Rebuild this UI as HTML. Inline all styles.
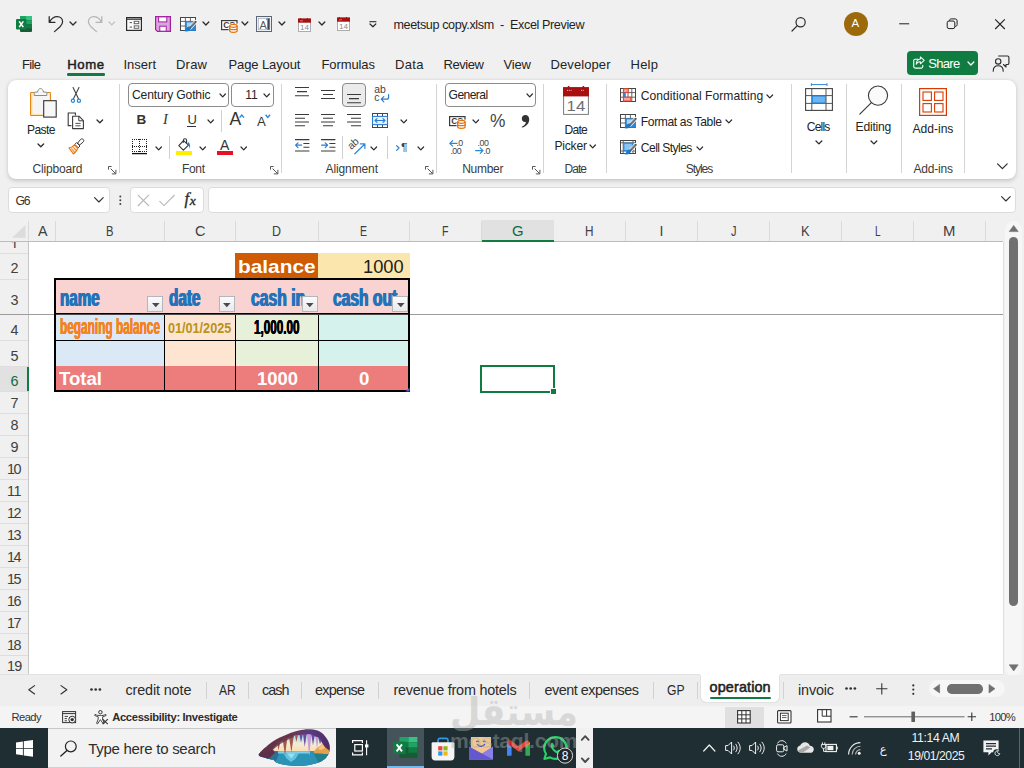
<!DOCTYPE html>
<html><head><meta charset="utf-8"><title>meetsup copy.xlsm - Excel Preview</title>
<style>
*{box-sizing:border-box;margin:0;padding:0}
html,body{width:1024px;height:768px;overflow:hidden;background:#f0f0f0;font-family:"Liberation Sans",sans-serif;color:#242424}
.a{position:absolute}
.t{position:absolute;white-space:pre;line-height:1}
svg{position:absolute;overflow:visible}
.sep{position:absolute;width:1px;background:#d4d4d4}
.fb{position:absolute;background:#fff;border:1px solid #dcdcdc;border-radius:4px;top:187px;height:26px}
.bx{position:absolute;background:#fff;border:1px solid #8c8c8c;border-radius:4px}
</style></head><body>
<svg style="left:16px;top:16px" width="16" height="16" viewBox="0 0 16 16">
<rect x="4" y="0" width="12" height="16" rx="1" fill="#185c37"/>
<rect x="4" y="0" width="6" height="4.3" fill="#21a366"/><rect x="10" y="0" width="6" height="4.3" fill="#33c481"/>
<rect x="4" y="4.3" width="6" height="4" fill="#107c41"/><rect x="10" y="4.3" width="6" height="4" fill="#21a366"/>
<rect x="4" y="8.3" width="6" height="3.9" fill="#185c37"/><rect x="10" y="8.3" width="6" height="3.9" fill="#107c41"/>
<rect x="0" y="3" width="10.5" height="10.5" rx="1" fill="#107c41"/>
<path d="M3.2 5.4 L7.3 11.1 M7.3 5.4 L3.2 11.1" stroke="#fff" stroke-width="1.6"/></svg>
<svg style="left:48px;top:15px" width="16" height="18" viewBox="0 0 16 18"><path d="M1.2 1.5 V7.3 H7 M1.6 7 C3.5 3.2 6.5 1.6 9.3 1.6 C12.6 1.6 14.6 4 14.6 6.8 C14.6 9 13.5 10.3 12 11.8 L6.5 16.6" fill="none" stroke="#2b2b2b" stroke-width="1.25" stroke-linecap="round" stroke-linejoin="round"/></svg>
<svg style="left:69.5px;top:22px" width="6" height="4"><path d="M0 0 L3.0 3 L6 0" fill="none" stroke="#2b2b2b" stroke-width="1.3" stroke-linecap="round" stroke-linejoin="round"/></svg>
<svg style="left:87px;top:15px" width="16" height="18" viewBox="0 0 16 18"><path d="M14.8 1.5 V7.3 H9 M14.4 7 C12.5 3.2 9.5 1.6 6.7 1.6 C3.4 1.6 1.4 4 1.4 6.8 C1.4 9 2.5 10.3 4 11.8 L9.5 16.6" fill="none" stroke="#b4b4b4" stroke-width="1.25" stroke-linecap="round" stroke-linejoin="round"/></svg>
<svg style="left:108.7px;top:22px" width="5.6" height="3.8"><path d="M0 0 L2.8 2.8 L5.6 0" fill="none" stroke="#c0c0c0" stroke-width="1.2" stroke-linecap="round" stroke-linejoin="round"/></svg>
<svg style="left:126px;top:17px" width="16" height="14" viewBox="0 0 16 14"><rect x=".6" y=".6" width="14.8" height="12.8" fill="#fafafa" stroke="#2b2b2b" stroke-width="1.2"/><path d="M.6 2.2H15.4" stroke="#2b2b2b" stroke-width="1.2"/>
<path d="M3.6 5.6H6M3.6 10.1H6" stroke="#555" stroke-width="1"/><rect x="8.2" y="4.3" width="4.6" height="2.4" fill="#fff" stroke="#555" stroke-width=".9"/><rect x="8.2" y="8.9" width="4.6" height="2.4" fill="#fff" stroke="#555" stroke-width=".9"/></svg>
<svg style="left:155px;top:16px" width="16" height="16" viewBox="0 0 16 16"><path d="M.6 .6H15.4V15.4H2.4L.6 13.6Z" fill="#dba4db" stroke="#a31fa3" stroke-width="1.2"/><rect x="3.6" y=".9" width="8.2" height="5" fill="#fff" stroke="#a31fa3" stroke-width="1"/><rect x="4.8" y="10.2" width="6.4" height="5" fill="#fff" stroke="#a31fa3" stroke-width="1"/></svg>
<svg style="left:180px;top:17px" width="17" height="15" viewBox="0 0 17 15"><rect x=".5" y=".5" width="15" height="13" fill="#fff" stroke="#444" stroke-width="1"/><path d="M.5 4.4H15.5M.5 9H15.5M5.4 .5V13.5M10.4 .5V13.5" stroke="#555" stroke-width=".9"/>
<rect x="5.6" y="4.4" width="10.4" height="9.4" fill="#2b88d8"/><rect x="6.8" y="5.4" width="5.6" height="5" fill="#a6d3f5"/>
<path d="M15.9 4.6L9.6 11.2" stroke="#fff" stroke-width="3.6" stroke-linecap="round"/><path d="M15.7 4.8L10 10.8" stroke="#505050" stroke-width="2" stroke-linecap="round"/><path d="M14.9 5.4L11 9.5" stroke="#b8b8b8" stroke-width=".7" stroke-linecap="round"/>
<path d="M9.9 9.6C8.1 9.1 6.3 10.6 5.9 12.8C5 13.5 4.3 13.7 3.4 13.6C6.2 15.4 10.6 14.4 11.1 10.9Z" fill="#1e78c8"/></svg>
<svg style="left:202.5px;top:22px" width="5.8" height="4"><path d="M0 0 L2.9 3 L5.8 0" fill="none" stroke="#2b2b2b" stroke-width="1.3" stroke-linecap="round" stroke-linejoin="round"/></svg>
<svg style="left:221px;top:20px" width="17" height="13" viewBox="0 0 17 13"><rect x=".6" y=".6" width="15.4" height="9" fill="#fff" stroke="#3a3a3a" stroke-width="1.2"/>
<text x="2.3" y="8" font-family="Liberation Sans,sans-serif" font-size="8.6" font-weight="700" fill="#3a3a3a" letter-spacing="-.6">CC</text>
<rect x="7.6" y="3.6" width="9.4" height="9.4" fill="#fff"/>
<path d="M8.7 5.8V11C8.7 12.7 16.1 12.7 16.1 11V5.8" fill="#fff" stroke="#e8710a" stroke-width="1.3"/><ellipse cx="12.4" cy="5.8" rx="3.7" ry="1.5" fill="#fff" stroke="#e8710a" stroke-width="1.3"/><path d="M8.7 8.4C8.7 10.1 16.1 10.1 16.1 8.4" fill="none" stroke="#e8710a" stroke-width="1.2"/></svg>
<svg style="left:242.4px;top:22px" width="5.8" height="4"><path d="M0 0 L2.9 3 L5.8 0" fill="none" stroke="#2b2b2b" stroke-width="1.3" stroke-linecap="round" stroke-linejoin="round"/></svg>
<svg style="left:256px;top:16px" width="16" height="16" viewBox="0 0 16 16"><rect x=".5" y=".5" width="15" height="15" fill="#fff" stroke="#5b6778" stroke-width="1"/><rect x="2.2" y="2.2" width="11.6" height="11.6" fill="#fff" stroke="#9aa3b0" stroke-width=".8"/>
<rect x="11.4" y="2.4" width="2.2" height="11.2" fill="#3c4350"/><rect x="10" y="2.4" width="1.6" height="1.8" fill="#8a93a1"/>
<text x="3.4" y="12.6" font-family="Liberation Sans,sans-serif" font-size="11" fill="#5a5a5a">A</text></svg>
<svg style="left:278.8px;top:22px" width="5.8" height="4"><path d="M0 0 L2.9 3 L5.8 0" fill="none" stroke="#2b2b2b" stroke-width="1.3" stroke-linecap="round" stroke-linejoin="round"/></svg>
<svg style="left:298px;top:17.8px" width="13" height="14" viewBox="0 0 13 14"><rect x=".4" y=".9" width="12.2" height="12.6" fill="#fff" stroke="#9a9a9a" stroke-width=".8"/><rect x="0" y=".5" width="13" height="4.2" fill="#a80f0f"/>
<path d="M2.4 0V1.4M9.4 0V1.4" stroke="#a80f0f" stroke-width="1"/><path d="M2 2.8H5" stroke="#e8a0a0" stroke-width=".7"/>
<text x="2.1" y="12.2" font-family="Liberation Sans,sans-serif" font-size="8" fill="#8a8a8a" textLength="9" lengthAdjust="spacingAndGlyphs">14</text></svg>
<svg style="left:318.6px;top:22px" width="5.8" height="4"><path d="M0 0 L2.9 3 L5.8 0" fill="none" stroke="#2b2b2b" stroke-width="1.3" stroke-linecap="round" stroke-linejoin="round"/></svg>
<svg style="left:337.2px;top:16.8px" width="13" height="14" viewBox="0 0 13 14"><rect x=".4" y=".9" width="12.2" height="12.6" fill="#fff" stroke="#9a9a9a" stroke-width=".8"/><rect x="0" y=".5" width="13" height="4.2" fill="#a80f0f"/>
<path d="M2.4 0V1.4M9.4 0V1.4" stroke="#a80f0f" stroke-width="1"/><path d="M2 2.8H5" stroke="#e8a0a0" stroke-width=".7"/>
<text x="2.1" y="12.2" font-family="Liberation Sans,sans-serif" font-size="8" fill="#8a8a8a" textLength="9" lengthAdjust="spacingAndGlyphs">14</text></svg>
<svg style="left:369px;top:21px" width="8" height="7"><path d="M.4 .7H7.4" stroke="#2b2b2b" stroke-width="1.1"/><path d="M1 3L3.9 5.8L6.8 3" fill="none" stroke="#2b2b2b" stroke-width="1.2" stroke-linecap="round" stroke-linejoin="round"/></svg>
<span class="t" style="left:393.50px;top:18.93px;font-size:12.6px;color:#1f1f1f;letter-spacing:-0.386px;">meetsup copy.xlsm  -  Excel Preview</span>
<svg style="left:791px;top:16px" width="16" height="16" viewBox="0 0 16 16"><circle cx="9.6" cy="6.2" r="4.6" fill="none" stroke="#2b2b2b" stroke-width="1.2"/><path d="M6.3 9.6L1 15" stroke="#2b2b2b" stroke-width="1.2" stroke-linecap="round"/></svg>
<div class="a" style="left:844px;top:12px;width:24px;height:24px;border-radius:12px;background:#9c690d"></div>
<span class="t" style="left:851.60px;top:18.47px;font-size:11.5px;color:#fff;">A</span>
<svg style="left:899px;top:18px" width="110" height="12"><path d="M.2 5.8H10.2" stroke="#1f1f1f" stroke-width="1"/><rect x="48.2" y="3" width="7.6" height="7.6" rx="1.8" fill="none" stroke="#1f1f1f" stroke-width="1"/><path d="M50.4 3V2.6C50.4 1.6 51.2 .9 52.2 .9H56C57.4 .9 58.1 1.6 58.1 3V6.6C58.1 7.6 57.4 8.4 56.4 8.4H56" fill="none" stroke="#1f1f1f" stroke-width="1"/><path d="M96.2 1.4L105.8 11M105.8 1.4L96.2 11" stroke="#1f1f1f" stroke-width="1.1"/></svg>
<span class="t" style="left:22.00px;top:57.70px;font-size:13px;letter-spacing:-0.651px;">File</span>
<span class="t" style="left:123.50px;top:57.70px;font-size:13px;">Insert</span>
<span class="t" style="left:176.00px;top:57.70px;font-size:13px;letter-spacing:0.219px;">Draw</span>
<span class="t" style="left:228.50px;top:57.70px;font-size:13px;letter-spacing:-0.102px;">Page Layout</span>
<span class="t" style="left:321.50px;top:57.70px;font-size:13px;letter-spacing:-0.098px;">Formulas</span>
<span class="t" style="left:395.00px;top:57.70px;font-size:13px;letter-spacing:0.344px;">Data</span>
<span class="t" style="left:443.50px;top:57.70px;font-size:13px;letter-spacing:-0.425px;">Review</span>
<span class="t" style="left:503.50px;top:57.70px;font-size:13px;letter-spacing:-0.151px;">View</span>
<span class="t" style="left:550.50px;top:57.70px;font-size:13px;letter-spacing:0.092px;">Developer</span>
<span class="t" style="left:630.50px;top:57.70px;font-size:13px;letter-spacing:0.250px;">Help</span>
<span class="t" style="left:67.20px;top:57.53px;font-size:13.2px;color:#1f1f1f;letter-spacing:0.604px;-webkit-text-stroke:.5px #1f1f1f;">Home</span>
<div class="a" style="left:67px;top:73.4px;width:37.5px;height:2.3px;border-radius:1.2px;background:#107c41"></div>
<div class="a" style="left:907px;top:51px;width:71px;height:24px;border-radius:4px;background:#107c41"></div>
<svg style="left:913px;top:56px" width="12" height="13" viewBox="0 0 12 13"><path d="M5 3.2H2.2C1.4 3.2 .7 3.9 .7 4.7V10.6C.7 11.4 1.4 12.1 2.2 12.1H8.3C9.1 12.1 9.8 11.4 9.8 10.6V9.3" fill="none" stroke="#fff" stroke-width="1.1" stroke-linecap="round"/><path d="M7.4 .9L11.2 4.4L7.4 7.8V5.8C5.4 5.7 4 6.5 3.2 8.3C3.3 5.2 4.8 3.2 7.4 3Z" fill="none" stroke="#fff" stroke-width="1.05" stroke-linejoin="round"/></svg>
<span class="t" style="left:928.20px;top:57.00px;font-size:13px;color:#fff;letter-spacing:-0.676px;">Share</span>
<svg style="left:967.5px;top:61.6px" width="5.8" height="4"><path d="M0 0 L2.9 3 L5.8 0" fill="none" stroke="#fff" stroke-width="1.3" stroke-linecap="round" stroke-linejoin="round"/></svg>
<svg style="left:992px;top:55px" width="18" height="17" viewBox="0 0 18 17"><path d="M6.2 1H15.6C16.3 1 16.9 1.6 16.9 2.3V8.2C16.9 8.9 16.3 9.5 15.6 9.5H14V12L11.4 9.5H11" fill="none" stroke="#2b2b2b" stroke-width="1.1" stroke-linejoin="round"/><circle cx="6.2" cy="6.4" r="2.7" fill="#f0f0f0" stroke="#2b2b2b" stroke-width="1.1"/><path d="M1.2 16.2C1.2 12.6 3.4 10.8 6.2 10.8C9 10.8 11.2 12.6 11.2 16.2" fill="none" stroke="#2b2b2b" stroke-width="1.1" stroke-linecap="round"/></svg>
<div class="a" style="left:8px;top:79.5px;width:1007.5px;height:99px;background:#fff;border-radius:8px;box-shadow:0 1.5px 4px rgba(0,0,0,.17),0 0 1px rgba(0,0,0,.12)"></div>
<div class="sep" style="left:119px;top:84px;height:89px"></div>
<div class="sep" style="left:281px;top:84px;height:89px"></div>
<div class="sep" style="left:436px;top:84px;height:89px"></div>
<div class="sep" style="left:543px;top:84px;height:89px"></div>
<div class="sep" style="left:606.4px;top:84px;height:89px"></div>
<div class="sep" style="left:791px;top:84px;height:89px"></div>
<div class="sep" style="left:846px;top:84px;height:89px"></div>
<div class="sep" style="left:901px;top:84px;height:89px"></div>
<div class="sep" style="left:964px;top:84px;height:89px"></div>
<div class="sep" style="left:221px;top:110px;height:22px;background:#d0d0d0"></div>
<div class="sep" style="left:169px;top:135.5px;height:23.0px;background:#d0d0d0"></div>
<div class="sep" style="left:342px;top:135.5px;height:23.0px;background:#d0d0d0"></div>
<div class="sep" style="left:387px;top:135.5px;height:23.0px;background:#d0d0d0"></div>
<span class="t" style="left:32.50px;top:162.84px;font-size:12px;color:#3b3b3b;letter-spacing:-0.172px;">Clipboard</span>
<svg style="left:108px;top:165.5px" width="9" height="9" viewBox="0 0 9 9"><path d="M.5 3.6V.5H3.6" fill="none" stroke="#555" stroke-width="1"/><path d="M2.6 2.6L7.6 7.6M7.9 3.8V7.9H3.8" fill="none" stroke="#555" stroke-width="1"/></svg>
<span class="t" style="left:182.00px;top:162.84px;font-size:12px;color:#3b3b3b;letter-spacing:-0.339px;">Font</span>
<svg style="left:269.7px;top:165.5px" width="9" height="9" viewBox="0 0 9 9"><path d="M.5 3.6V.5H3.6" fill="none" stroke="#555" stroke-width="1"/><path d="M2.6 2.6L7.6 7.6M7.9 3.8V7.9H3.8" fill="none" stroke="#555" stroke-width="1"/></svg>
<span class="t" style="left:325.50px;top:162.84px;font-size:12px;color:#3b3b3b;letter-spacing:-0.109px;">Alignment</span>
<svg style="left:425.2px;top:165.5px" width="9" height="9" viewBox="0 0 9 9"><path d="M.5 3.6V.5H3.6" fill="none" stroke="#555" stroke-width="1"/><path d="M2.6 2.6L7.6 7.6M7.9 3.8V7.9H3.8" fill="none" stroke="#555" stroke-width="1"/></svg>
<span class="t" style="left:462.20px;top:162.84px;font-size:12px;color:#3b3b3b;letter-spacing:-0.278px;">Number</span>
<svg style="left:531.8px;top:165.5px" width="9" height="9" viewBox="0 0 9 9"><path d="M.5 3.6V.5H3.6" fill="none" stroke="#555" stroke-width="1"/><path d="M2.6 2.6L7.6 7.6M7.9 3.8V7.9H3.8" fill="none" stroke="#555" stroke-width="1"/></svg>
<span class="t" style="left:564.50px;top:162.84px;font-size:12px;color:#3b3b3b;letter-spacing:-0.953px;">Date</span>
<span class="t" style="left:685.70px;top:162.84px;font-size:12px;color:#3b3b3b;letter-spacing:-1.038px;">Styles</span>
<span class="t" style="left:913.50px;top:162.84px;font-size:12px;color:#3b3b3b;letter-spacing:-0.198px;">Add-ins</span>
<svg style="left:29px;top:87px" width="29" height="32" viewBox="0 0 29 32">
<rect x="1.6" y="5.5" width="19.8" height="23" rx=".6" fill="#fde6b0" stroke="#e8830e" stroke-width="1.1"/>
<rect x="3.6" y="6.4" width="17" height="20.4" fill="#f5f5f5"/>
<path d="M5.2 8.5V5.8C5.2 5.4 5.5 5.1 5.9 5.1H8.6C8.9 2.8 10 1.5 11.5 1.5C13 1.5 14.1 2.8 14.4 5.1H17.1C17.5 5.1 17.8 5.4 17.8 5.8V8.5Z" fill="#f7f7f7" stroke="#8a8a8a" stroke-width="1" stroke-linejoin="round"/>
<rect x="14.7" y="13.7" width="12.5" height="16.4" fill="#f7f7f7" stroke="#333" stroke-width="1.1"/></svg>
<span class="t" style="left:27.00px;top:123.76px;font-size:12.1px;letter-spacing:-0.609px;">Paste</span>
<svg style="left:37.6px;top:144px" width="5.6" height="3.8"><path d="M0 0 L2.8 2.8 L5.6 0" fill="none" stroke="#2b2b2b" stroke-width="1.3" stroke-linecap="round" stroke-linejoin="round"/></svg>
<svg style="left:70px;top:86px" width="13" height="18" viewBox="0 0 13 18"><path d="M3.1 1.4L8.7 13.2M9 1.4L3.2 13.2" stroke="#444" stroke-width="1.1" stroke-linecap="round"/><circle cx="2.9" cy="14.8" r="1.6" fill="#fff" stroke="#2b88d8" stroke-width="1.2"/><circle cx="8.9" cy="14.8" r="1.6" fill="#fff" stroke="#2b88d8" stroke-width="1.2"/></svg>
<svg style="left:67px;top:112px" width="18" height="18" viewBox="0 0 18 18"><path d="M4.4 13.6H1.2V1H8.4V3.4" fill="none" stroke="#3b3b3b" stroke-width="1.1"/><path d="M5.6 4.2H12L16.4 8.6V16.6H5.6Z" fill="#fff" stroke="#3b3b3b" stroke-width="1.1" stroke-linejoin="round"/><path d="M11.8 4.4V8.8H16.2" fill="none" stroke="#3b3b3b" stroke-width="1"/><path d="M8.4 11.4H13.6M8.4 13.8H13.6" stroke="#3b3b3b" stroke-width=".9"/></svg>
<svg style="left:96.6px;top:120px" width="5.6" height="3.8"><path d="M0 0 L2.8 2.8 L5.6 0" fill="none" stroke="#2b2b2b" stroke-width="1.3" stroke-linecap="round" stroke-linejoin="round"/></svg>
<svg style="left:68px;top:138px" width="17" height="17" viewBox="0 0 17 17"><path d="M15.2 1.4C16 2.2 16 3.2 15.2 4L11.6 7L9.6 5L12.6 1.4C13.4 .6 14.4 .6 15.2 1.4Z" fill="#fff" stroke="#3b3b3b" stroke-width="1"/><path d="M8.6 4.6L12 8L10.2 9.8L6.8 6.4Z" fill="#fff" stroke="#3b3b3b" stroke-width="1"/><path d="M6.4 6.8L9.8 10.2C9 12.4 7.4 14.4 5.4 16L1 10C3.2 9.6 5 8.6 6.4 6.8Z" fill="#fbe3c8" stroke="#e8710a" stroke-width="1.1" stroke-linejoin="round"/><path d="M3.4 10.6L6.6 14.4M5.4 9.4L8.2 12.6" stroke="#e8710a" stroke-width=".9"/></svg>
<div class="bx" style="left:128px;top:83px;width:100.5px;height:23.6px"></div>
<span class="t" style="left:132.00px;top:88.76px;font-size:12.1px;letter-spacing:-0.167px;">Century Gothic</span>
<svg style="left:220px;top:93.6px" width="5.4" height="3.8"><path d="M0 0 L2.7 2.8 L5.4 0" fill="none" stroke="#2b2b2b" stroke-width="1.2" stroke-linecap="round" stroke-linejoin="round"/></svg>
<div class="bx" style="left:230.8px;top:83px;width:42.8px;height:23.6px"></div>
<span class="t" style="left:245.20px;top:88.76px;font-size:12.1px;">11</span>
<svg style="left:264.2px;top:93.6px" width="5.4" height="3.8"><path d="M0 0 L2.7 2.8 L5.4 0" fill="none" stroke="#2b2b2b" stroke-width="1.2" stroke-linecap="round" stroke-linejoin="round"/></svg>
<span class="t" style="left:136.60px;top:112.87px;font-size:13.5px;font-weight:700;color:#333;letter-spacing:-1.750px;">B</span>
<span class="t" style="left:163.00px;top:112.21px;font-size:14.5px;color:#333;font-family:'Liberation Serif',serif;font-style:italic;">I</span>
<span class="t" style="left:187.60px;top:113.00px;font-size:13px;color:#333;letter-spacing:-1.391px;">U</span>
<div class="a" style="left:187px;top:125.6px;width:9px;height:1px;background:#333"></div>
<svg style="left:208px;top:120px" width="5.4" height="3.8"><path d="M0 0 L2.7 2.8 L5.4 0" fill="none" stroke="#2b2b2b" stroke-width="1.2" stroke-linecap="round" stroke-linejoin="round"/></svg>
<span class="t" style="left:229.40px;top:111.19px;font-size:17.5px;color:#333;letter-spacing:-0.688px;">A</span>
<svg style="left:239.2px;top:113.8px" width="6" height="5"><path d="M.6 3.6L2.8 1L5 3.6" fill="none" stroke="#2b88d8" stroke-width="1.4"/></svg>
<span class="t" style="left:257.00px;top:114.83px;font-size:13.2px;color:#333;letter-spacing:-0.197px;">A</span>
<svg style="left:265px;top:113.6px" width="6" height="5"><path d="M.6 .8L2.8 3.4L5 .8" fill="none" stroke="#2b88d8" stroke-width="1.4"/></svg>
<svg style="left:132px;top:139px" width="15" height="16" viewBox="0 0 15 16"><path d="M0 .5H15M0 7.5H15M0 12.5H15" stroke="#222" stroke-width="1" stroke-dasharray="1 1"/><path d="M.5 0V13M7.5 0V13M14.5 0V13" stroke="#222" stroke-width="1" stroke-dasharray="1 1"/><path d="M0 14.6H15" stroke="#111" stroke-width="1.3"/></svg>
<svg style="left:155.6px;top:147px" width="5.4" height="3.8"><path d="M0 0 L2.7 2.8 L5.4 0" fill="none" stroke="#2b2b2b" stroke-width="1.2" stroke-linecap="round" stroke-linejoin="round"/></svg>
<svg style="left:176px;top:138px" width="17" height="17" viewBox="0 0 17 17"><path d="M2.8 7.7L7.5 2.6L12.5 7.1L7.4 12.2Z" fill="#fff" stroke="#333" stroke-width="1.1" stroke-linejoin="round"/><path d="M7.4 4.8V2.6C7.4 1.4 8.2 .8 9 .8C9.9 .8 10.6 1.4 10.6 2.6V5.4" fill="none" stroke="#333" stroke-width="1.1"/><path d="M12.2 4C13.8 5 14.8 7.6 13.6 10.8C13.5 8.8 13 7.6 11.6 6.4Z" fill="#2b7cd3"/><rect x="0" y="13" width="16" height="4" fill="#ffee00"/></svg>
<svg style="left:200px;top:147px" width="5.4" height="3.8"><path d="M0 0 L2.7 2.8 L5.4 0" fill="none" stroke="#2b2b2b" stroke-width="1.2" stroke-linecap="round" stroke-linejoin="round"/></svg>
<span class="t" style="left:220.00px;top:137.95px;font-size:14px;color:#333;letter-spacing:0.656px;">A</span>
<div class="a" style="left:217px;top:150.6px;width:16px;height:4.2px;background:#e81123"></div>
<svg style="left:240.6px;top:147px" width="5.4" height="3.8"><path d="M0 0 L2.7 2.8 L5.4 0" fill="none" stroke="#2b2b2b" stroke-width="1.2" stroke-linecap="round" stroke-linejoin="round"/></svg>
<svg style="left:295px;top:86.9px" width="14" height="12.299999999999999"><path d="M0.0 0.5H14.0M2.0 4.599999999999994H12.0M0.0 8.700000000000003H14.0" stroke="#3b3b3b" stroke-width="1.05"/></svg>
<svg style="left:321px;top:90.1px" width="14" height="12"><path d="M0.0 0.5H14.0M2.0 4.5H12.0M0.0 8.5H14.0" stroke="#3b3b3b" stroke-width="1.05"/></svg>
<div class="a" style="left:342.2px;top:83.4px;width:23.4px;height:23.2px;border:1px solid #8a8a8a;border-radius:4px;background:#ebebeb"></div>
<svg style="left:347px;top:93.5px" width="14" height="12.299999999999999"><path d="M0.0 0.5H14.0M2.0 4.599999999999994H12.0M0.0 8.700000000000003H14.0" stroke="#3b3b3b" stroke-width="1.05"/></svg>
<span class="t" style="left:374.20px;top:85.20px;font-size:10.4px;color:#444;letter-spacing:0.037px;">ab</span>
<span class="t" style="left:374.20px;top:93.20px;font-size:10.4px;color:#444;">c</span>
<svg style="left:380px;top:93.6px" width="10" height="9" viewBox="0 0 10 9"><path d="M8.6 .6V3.2C8.6 4.4 7.8 5.2 6.6 5.2H1.4M3.8 2.6L1.2 5.2L3.8 7.8" fill="none" stroke="#2b7cd3" stroke-width="1.2" stroke-linecap="round" stroke-linejoin="round"/></svg>
<svg style="left:295px;top:114.3px" width="14" height="15.0"><path d="M0 0.5H14M0 4.25H10M0 8.0H14M0 11.75H10" stroke="#3b3b3b" stroke-width="1.05"/></svg>
<svg style="left:321px;top:114.3px" width="14" height="15.0"><path d="M0.0 0.5H14.0M2.0 4.25H12.0M0.0 8.0H14.0M2.0 11.75H12.0" stroke="#3b3b3b" stroke-width="1.05"/></svg>
<svg style="left:347px;top:114.3px" width="14" height="15.0"><path d="M0 0.5H14M4 4.25H14M0 8.0H14M4 11.75H14" stroke="#3b3b3b" stroke-width="1.05"/></svg>
<svg style="left:372px;top:113px" width="16" height="15" viewBox="0 0 16 15"><rect x=".5" y=".5" width="15" height="14" fill="#fff" stroke="#444" stroke-width="1"/><path d="M5.5 .5V3.4M10.5 .5V3.4M5.5 11.6V14.5M10.5 11.6V14.5" stroke="#444" stroke-width="1"/><rect x=".5" y="3.4" width="15" height="8.2" fill="#e6f2fb" stroke="#2b7cd3" stroke-width="1.1"/><path d="M3 7.5H13M5 5.6L3 7.5L5 9.4M11 5.6L13 7.5L11 9.4" fill="none" stroke="#2b7cd3" stroke-width="1.1" stroke-linecap="round" stroke-linejoin="round"/></svg>
<svg style="left:400.6px;top:120px" width="5.6" height="3.8"><path d="M0 0 L2.8 2.8 L5.6 0" fill="none" stroke="#2b2b2b" stroke-width="1.2" stroke-linecap="round" stroke-linejoin="round"/></svg>
<svg style="left:294.8px;top:139.4px" width="15" height="13" viewBox="0 0 15 13"><path d="M0 .6H14.4M8.4 4.4H14.4M8.4 8.2H14.4M0 12H14.4" stroke="#3b3b3b" stroke-width="1.05"/><path d="M6.6 6.2H.8M3 3.8L.6 6.2L3 8.6" fill="none" stroke="#2b7cd3" stroke-width="1.2" stroke-linecap="round" stroke-linejoin="round"/></svg>
<svg style="left:320.6px;top:139.4px" width="15" height="13" viewBox="0 0 15 13"><path d="M0 .6H14.4M8.4 4.4H14.4M8.4 8.2H14.4M0 12H14.4" stroke="#3b3b3b" stroke-width="1.05"/><path d="M.6 6.2H6.4M4.2 3.8L6.6 6.2L4.2 8.6" fill="none" stroke="#2b7cd3" stroke-width="1.2" stroke-linecap="round" stroke-linejoin="round"/></svg>
<span class="t" style="left:348.4px;top:139.4px;font-size:10.4px;color:#444;transform:rotate(-42deg);transform-origin:50% 50%;letter-spacing:-.3px">ab</span>
<svg style="left:354px;top:142.6px" width="12" height="12" viewBox="0 0 12 12"><path d="M.8 10.8L10.6 1.2M6.4 .9H10.9V5.4" fill="none" stroke="#2b88d8" stroke-width="1.2" stroke-linecap="round" stroke-linejoin="round"/></svg>
<svg style="left:371px;top:147px" width="5.6" height="3.8"><path d="M0 0 L2.8 2.8 L5.6 0" fill="none" stroke="#2b2b2b" stroke-width="1.2" stroke-linecap="round" stroke-linejoin="round"/></svg>
<svg style="left:396px;top:144.6px" width="4" height="6"><path d="M.6 .6L3 3L.6 5.4" fill="none" stroke="#2b7cd3" stroke-width="1.2" stroke-linecap="round" stroke-linejoin="round"/></svg>
<span class="t" style="left:400.60px;top:141.87px;font-size:11.5px;color:#444;transform:scaleX(1.0667);transform-origin:0 0;">¶</span>
<svg style="left:417.8px;top:147px" width="5.6" height="3.8"><path d="M0 0 L2.8 2.8 L5.6 0" fill="none" stroke="#2b2b2b" stroke-width="1.2" stroke-linecap="round" stroke-linejoin="round"/></svg>
<div class="bx" style="left:445.2px;top:83px;width:90.6px;height:23.6px"></div>
<span class="t" style="left:448.60px;top:88.76px;font-size:12.1px;letter-spacing:-0.589px;">General</span>
<svg style="left:527px;top:93.6px" width="5.4" height="3.8"><path d="M0 0 L2.7 2.8 L5.4 0" fill="none" stroke="#2b2b2b" stroke-width="1.2" stroke-linecap="round" stroke-linejoin="round"/></svg>
<svg style="left:448.5px;top:116px" width="17" height="13" viewBox="0 0 17 13"><rect x=".6" y=".6" width="15.4" height="9" fill="#fff" stroke="#3a3a3a" stroke-width="1.2"/>
<text x="2.3" y="8" font-family="Liberation Sans,sans-serif" font-size="8.6" font-weight="700" fill="#3a3a3a" letter-spacing="-.6">CC</text>
<rect x="7.6" y="3.6" width="9.4" height="9.4" fill="#fff"/>
<path d="M8.7 5.8V11C8.7 12.7 16.1 12.7 16.1 11V5.8" fill="#fff" stroke="#e8710a" stroke-width="1.3"/><ellipse cx="12.4" cy="5.8" rx="3.7" ry="1.5" fill="#fff" stroke="#e8710a" stroke-width="1.3"/><path d="M8.7 8.4C8.7 10.1 16.1 10.1 16.1 8.4" fill="none" stroke="#e8710a" stroke-width="1.2"/></svg>
<svg style="left:473px;top:120px" width="5.6" height="3.8"><path d="M0 0 L2.8 2.8 L5.6 0" fill="none" stroke="#2b2b2b" stroke-width="1.2" stroke-linecap="round" stroke-linejoin="round"/></svg>
<span class="t" style="left:490.40px;top:112.02px;font-size:18.4px;color:#444;transform:scaleX(0.9414);transform-origin:0 0;">%</span>
<svg style="left:520.6px;top:115px" width="9" height="13" viewBox="0 0 9 13"><path d="M4.4 0C6.8 0 8.2 1.8 8.2 4.4C8.2 8.2 5.4 11.4 1 12.6L.6 11.8C3.2 10.6 4.8 8.8 4.9 6.9C4.6 7 4.3 7 4 7C2 7 .8 5.6 .8 3.6C.8 1.6 2.2 0 4.4 0Z" fill="#333"/></svg>
<svg style="left:448.8px;top:139px" width="16" height="15" viewBox="0 0 16 15"><path d="M8 4.4H.8M3.6 1.6L.8 4.4L3.6 7.2" fill="none" stroke="#2b88d8" stroke-width="1.2" stroke-linecap="round" stroke-linejoin="round"/><text x="7.4" y="6.6" font-family="Liberation Sans,sans-serif" font-size="8.8" fill="#444" letter-spacing="-.5">.0</text><text x="1.4" y="14.6" font-family="Liberation Sans,sans-serif" font-size="8.8" fill="#444" letter-spacing="-.5">.00</text></svg>
<svg style="left:474.8px;top:139px" width="16" height="15" viewBox="0 0 16 15"><text x="2.6" y="6.6" font-family="Liberation Sans,sans-serif" font-size="8.8" fill="#444" letter-spacing="-.5">.00</text><path d="M.6 11.6H8M5.2 8.8L8 11.6L5.2 14.4" fill="none" stroke="#2b88d8" stroke-width="1.2" stroke-linecap="round" stroke-linejoin="round"/><text x="8.6" y="14.6" font-family="Liberation Sans,sans-serif" font-size="8.8" fill="#444" letter-spacing="-.5">.0</text></svg>
<svg style="left:562.6px;top:86px" width="26" height="29" viewBox="0 0 26 29"><rect x=".6" y="1.6" width="24.8" height="26.8" fill="#fff" stroke="#7a7a7a" stroke-width="1"/><rect x="0" y="1.2" width="26" height="9.2" fill="#a80f0f"/><path d="M5.6 0V2.2M20.4 0V2.2" stroke="#a80f0f" stroke-width="1.6"/>
<path d="M4 4.4H9M18 4.4H21.6" stroke="#f0b8b8" stroke-width="1" stroke-dasharray="1 .8"/>
<text x="3.6" y="24.6" font-family="Liberation Sans,sans-serif" font-size="15" fill="#6e6e6e" textLength="18.6" lengthAdjust="spacingAndGlyphs">14</text></svg>
<span class="t" style="left:564.40px;top:123.76px;font-size:12.1px;letter-spacing:-0.716px;">Date</span>
<span class="t" style="left:554.40px;top:140.26px;font-size:12.1px;letter-spacing:-0.202px;">Picker</span>
<svg style="left:590px;top:145.4px" width="5.4" height="3.8"><path d="M0 0 L2.7 2.8 L5.4 0" fill="none" stroke="#2b2b2b" stroke-width="1.2" stroke-linecap="round" stroke-linejoin="round"/></svg>
<svg style="left:620px;top:88px" width="16" height="14" viewBox="0 0 16 14"><rect x=".5" y=".5" width="15" height="13" fill="#fff" stroke="#444" stroke-width="1"/><path d="M.5 4.6H15.5M.5 9.2H15.5M4.2 .5V13.5M8 .5V13.5M11.8 .5V13.5" stroke="#555" stroke-width=".9"/>
<rect x="3.4" y=".8" width="4.8" height="3.6" fill="#f4a3a8" stroke="#e8431f" stroke-width="1"/><rect x="3.4" y="4.6" width="2.4" height="4.4" fill="#2b88d8"/><path d="M3.4 4.4V9.4" stroke="#e8431f" stroke-width="1"/>
<rect x="3.4" y="9.2" width="7.4" height="3.8" fill="#f4a3a8" stroke="#e8431f" stroke-width="1"/></svg>
<svg style="left:620px;top:114px" width="17" height="15" viewBox="0 0 17 15"><rect x=".5" y=".5" width="15" height="13" fill="#fff" stroke="#444" stroke-width="1"/><path d="M.5 4.4H15.5M.5 9H15.5M5.4 .5V13.5M10.4 .5V13.5" stroke="#555" stroke-width=".9"/>
<rect x="5.6" y="4.4" width="10.4" height="9.4" fill="#2b88d8"/><rect x="6.8" y="5.4" width="5.6" height="5" fill="#a6d3f5"/><path d="M15.9 4.6L9.6 11.2" stroke="#fff" stroke-width="3.6" stroke-linecap="round"/><path d="M15.7 4.8L10 10.8" stroke="#505050" stroke-width="2" stroke-linecap="round"/><path d="M14.9 5.4L11 9.5" stroke="#b8b8b8" stroke-width=".7" stroke-linecap="round"/>
<path d="M9.9 9.6C8.1 9.1 6.3 10.6 5.9 12.8C5 13.5 4.3 13.7 3.4 13.6C6.2 15.4 10.6 14.4 11.1 10.9Z" fill="#1e78c8"/></svg>
<svg style="left:620px;top:140px" width="17" height="15" viewBox="0 0 17 15"><rect x=".5" y=".5" width="15" height="13" fill="#fff" stroke="#444" stroke-width="1"/><path d="M.5 2.8H15.5M.5 11H15.5M3.2 .5V13.5M13 .5V13.5" stroke="#555" stroke-width=".9"/>
<rect x="3.2" y="2.6" width="9.8" height="8.6" fill="#2b88d8"/><rect x="4.4" y="3.8" width="7.4" height="6.2" fill="#8cc4f2"/><path d="M15.9 4.6L9.6 11.2" stroke="#fff" stroke-width="3.6" stroke-linecap="round"/><path d="M15.7 4.8L10 10.8" stroke="#505050" stroke-width="2" stroke-linecap="round"/><path d="M14.9 5.4L11 9.5" stroke="#b8b8b8" stroke-width=".7" stroke-linecap="round"/>
<path d="M9.9 9.6C8.1 9.1 6.3 10.6 5.9 12.8C5 13.5 4.3 13.7 3.4 13.6C6.2 15.4 10.6 14.4 11.1 10.9Z" fill="#1e78c8"/></svg>
<span class="t" style="left:640.80px;top:89.96px;font-size:12.1px;letter-spacing:0.035px;">Conditional Formatting</span>
<svg style="left:767.4px;top:94.6px" width="5.6" height="3.8"><path d="M0 0 L2.8 2.8 L5.6 0" fill="none" stroke="#2b2b2b" stroke-width="1.2" stroke-linecap="round" stroke-linejoin="round"/></svg>
<span class="t" style="left:640.80px;top:115.76px;font-size:12.1px;letter-spacing:-0.379px;">Format as Table</span>
<svg style="left:725.8px;top:120.4px" width="5.6" height="3.8"><path d="M0 0 L2.8 2.8 L5.6 0" fill="none" stroke="#2b2b2b" stroke-width="1.2" stroke-linecap="round" stroke-linejoin="round"/></svg>
<span class="t" style="left:640.80px;top:142.06px;font-size:12.1px;letter-spacing:-0.554px;">Cell Styles</span>
<svg style="left:697px;top:146.6px" width="5.6" height="3.8"><path d="M0 0 L2.8 2.8 L5.6 0" fill="none" stroke="#2b2b2b" stroke-width="1.2" stroke-linecap="round" stroke-linejoin="round"/></svg>
<svg style="left:805px;top:83px" width="28" height="28" viewBox="0 0 28 28"><path d="M6.4 1.6H22M6.4 .2V3M22 .2V3" stroke="#2b88d8" stroke-width="1"/><rect x=".6" y="5.6" width="26.8" height="21.8" fill="#fff" stroke="#444" stroke-width="1.1"/><path d="M.6 12.6H27.4M.6 20.4H27.4M6.8 5.6V27.4M21 5.6V27.4" stroke="#555" stroke-width="1"/><rect x="7.4" y="13.2" width="13" height="6.6" fill="#6cb5f0" stroke="#2b88d8" stroke-width="1"/></svg>
<span class="t" style="left:806.80px;top:121.16px;font-size:12.1px;letter-spacing:-0.823px;">Cells</span>
<svg style="left:815.6px;top:140.8px" width="5.8" height="3.9"><path d="M0 0 L2.9 2.9 L5.8 0" fill="none" stroke="#2b2b2b" stroke-width="1.3" stroke-linecap="round" stroke-linejoin="round"/></svg>
<svg style="left:859px;top:85px" width="30" height="30" viewBox="0 0 30 30"><circle cx="19" cy="10.6" r="9.6" fill="#fafafa" stroke="#3b3b3b" stroke-width="1.1"/><path d="M12.4 17.6L.8 29.2" stroke="#3b3b3b" stroke-width="1.2" stroke-linecap="round"/></svg>
<span class="t" style="left:855.60px;top:121.16px;font-size:12.1px;letter-spacing:-0.231px;">Editing</span>
<svg style="left:870.6px;top:140.8px" width="5.8" height="3.9"><path d="M0 0 L2.9 2.9 L5.8 0" fill="none" stroke="#2b2b2b" stroke-width="1.3" stroke-linecap="round" stroke-linejoin="round"/></svg>
<svg style="left:919px;top:88px" width="28" height="28" viewBox="0 0 28 28"><rect x=".6" y=".6" width="26.8" height="26.8" fill="#fff" stroke="#d83b01" stroke-width="1.2"/><rect x="4" y="4" width="8.4" height="8.4" fill="none" stroke="#d83b01" stroke-width="1.1"/><rect x="15.6" y="4" width="8.4" height="8.4" fill="none" stroke="#d83b01" stroke-width="1.1"/><rect x="4" y="15.6" width="8.4" height="8.4" fill="none" stroke="#d83b01" stroke-width="1.1"/><rect x="15.6" y="15.6" width="8.4" height="8.4" fill="none" stroke="#d83b01" stroke-width="1.1"/></svg>
<span class="t" style="left:912.60px;top:122.76px;font-size:12.1px;letter-spacing:-0.036px;">Add-ins</span>
<svg style="left:996.6px;top:162.6px" width="11" height="7"><path d="M.6 .8L5.4 5.6L10.2 .8" fill="none" stroke="#2b2b2b" stroke-width="1.2" stroke-linecap="round" stroke-linejoin="round"/></svg>
<div class="fb" style="left:8px;width:101.5px"></div>
<div class="fb" style="left:130.2px;width:73.4px"></div>
<div class="fb" style="left:208px;width:807.8px"></div>
<span class="t" style="left:15.60px;top:195.27px;font-size:12.2px;color:#333;letter-spacing:-1.266px;">G6</span>
<svg style="left:93.6px;top:197.4px" width="10" height="6"><path d="M.6 .7L4.9 5L9.2 .7" fill="none" stroke="#333" stroke-width="1.15" stroke-linecap="round" stroke-linejoin="round"/></svg>
<svg style="left:119px;top:195px" width="3" height="11"><circle cx="1.3" cy="1.4" r="1" fill="#444"/><circle cx="1.3" cy="5.2" r="1" fill="#444"/><circle cx="1.3" cy="9" r="1" fill="#444"/></svg>
<svg style="left:137px;top:194px" width="40" height="13"><path d="M.8 .8L12 12M12 .8L.8 12" stroke="#b8b8b8" stroke-width="1.1"/><path d="M22.4 7.2L27 11.6L37.6 1" fill="none" stroke="#b8b8b8" stroke-width="1.1"/></svg>
<span class="t" style="left:184.40px;top:191.25px;font-size:16.5px;color:#2b2b2b;font-family:'Liberation Serif',serif;font-style:italic;-webkit-text-stroke:.35px #2b2b2b;">f</span>
<span class="t" style="left:189.80px;top:193.75px;font-size:13.5px;color:#2b2b2b;font-family:'Liberation Serif',serif;font-style:italic;-webkit-text-stroke:.35px #2b2b2b;">x</span>
<svg style="left:1001.4px;top:195.6px" width="10" height="6"><path d="M.6 .7L4.9 5L9.2 .7" fill="none" stroke="#333" stroke-width="1.15" stroke-linecap="round" stroke-linejoin="round"/></svg>
<div class="a" style="left:29px;top:242px;width:974px;height:432px;background:#fff"></div>
<div class="a" style="left:0;top:241px;width:1003px;height:1px;background:#bdbdbd"></div>
<div class="a" style="left:28px;top:242px;width:1px;height:432px;background:#c6c6c6"></div>
<div class="a" style="left:1002.6px;top:242px;width:1px;height:432px;background:#e0e0e0"></div>
<div class="a" style="left:0;top:674px;width:1003px;height:1px;background:#e2e2e2"></div>
<svg style="left:11.5px;top:224.5px" width="14" height="13"><path d="M13.5 0V12.8H0Z" fill="#dcdcdc"/></svg>
<div class="a" style="left:55px;top:221px;width:1px;height:20px;background:#dadada"></div>
<div class="a" style="left:164px;top:221px;width:1px;height:20px;background:#dadada"></div>
<div class="a" style="left:235px;top:221px;width:1px;height:20px;background:#dadada"></div>
<div class="a" style="left:318px;top:221px;width:1px;height:20px;background:#dadada"></div>
<div class="a" style="left:409px;top:221px;width:1px;height:20px;background:#dadada"></div>
<div class="a" style="left:481px;top:221px;width:1px;height:20px;background:#dadada"></div>
<div class="a" style="left:553px;top:221px;width:1px;height:20px;background:#dadada"></div>
<div class="a" style="left:625px;top:221px;width:1px;height:20px;background:#dadada"></div>
<div class="a" style="left:697px;top:221px;width:1px;height:20px;background:#dadada"></div>
<div class="a" style="left:769px;top:221px;width:1px;height:20px;background:#dadada"></div>
<div class="a" style="left:841px;top:221px;width:1px;height:20px;background:#dadada"></div>
<div class="a" style="left:913px;top:221px;width:1px;height:20px;background:#dadada"></div>
<div class="a" style="left:985px;top:221px;width:1px;height:20px;background:#dadada"></div>
<div class="a" style="left:28px;top:221px;width:1px;height:20px;background:#dadada"></div>
<div class="a" style="left:482px;top:220px;width:72px;height:22px;background:#e1e1e1;border-bottom:2px solid #107c41"></div>
<span class="t" style="left:37.55px;top:223.58px;font-size:14.2px;color:#404040;transform:scaleX(1.0033);transform-origin:0 0;">A</span>
<span class="t" style="left:106.05px;top:223.58px;font-size:14.2px;color:#404040;transform:scaleX(0.7921);transform-origin:0 0;">B</span>
<span class="t" style="left:194.55px;top:223.58px;font-size:14.2px;color:#404040;transform:scaleX(1.0244);transform-origin:0 0;">C</span>
<span class="t" style="left:272.30px;top:223.58px;font-size:14.2px;color:#404040;transform:scaleX(0.8780);transform-origin:0 0;">D</span>
<span class="t" style="left:360.30px;top:223.58px;font-size:14.2px;color:#404040;transform:scaleX(0.7393);transform-origin:0 0;">E</span>
<span class="t" style="left:442.05px;top:223.58px;font-size:14.2px;color:#404040;transform:scaleX(0.7495);transform-origin:0 0;">F</span>
<span class="t" style="left:511.50px;top:223.58px;font-size:14.2px;color:#0e6b3a;transform:scaleX(1.0501);transform-origin:0 0;">G</span>
<span class="t" style="left:585.05px;top:223.58px;font-size:14.2px;color:#404040;transform:scaleX(0.8293);transform-origin:0 0;">H</span>
<span class="t" style="left:659.40px;top:223.58px;font-size:14.2px;color:#404040;">I</span>
<span class="t" style="left:730.55px;top:223.58px;font-size:14.2px;color:#404040;transform:scaleX(0.7753);transform-origin:0 0;">J</span>
<span class="t" style="left:801.00px;top:223.58px;font-size:14.2px;color:#404040;transform:scaleX(0.9083);transform-origin:0 0;">K</span>
<span class="t" style="left:874.50px;top:223.58px;font-size:14.2px;color:#404040;transform:scaleX(0.7097);transform-origin:0 0;">L</span>
<span class="t" style="left:943.10px;top:223.58px;font-size:14.2px;color:#404040;transform:scaleX(1.0483);transform-origin:0 0;">M</span>
<div class="a" style="left:0;top:367px;width:29px;height:24px;background:#e1e1e1;border-right:2px solid #107c41"></div>
<div class="a" style="left:0;top:253px;width:28px;height:1px;background:#dedede"></div>
<div class="a" style="left:0;top:279px;width:28px;height:1px;background:#dedede"></div>
<div class="a" style="left:0;top:314px;width:28px;height:1px;background:#dedede"></div>
<div class="a" style="left:0;top:340px;width:28px;height:1px;background:#dedede"></div>
<div class="a" style="left:0;top:366px;width:28px;height:1px;background:#dedede"></div>
<div class="a" style="left:0;top:391px;width:28px;height:1px;background:#dedede"></div>
<div class="a" style="left:0;top:413px;width:28px;height:1px;background:#dedede"></div>
<div class="a" style="left:0;top:435px;width:28px;height:1px;background:#dedede"></div>
<div class="a" style="left:0;top:457px;width:28px;height:1px;background:#dedede"></div>
<div class="a" style="left:0;top:479px;width:28px;height:1px;background:#dedede"></div>
<div class="a" style="left:0;top:501px;width:28px;height:1px;background:#dedede"></div>
<div class="a" style="left:0;top:523px;width:28px;height:1px;background:#dedede"></div>
<div class="a" style="left:0;top:545px;width:28px;height:1px;background:#dedede"></div>
<div class="a" style="left:0;top:567px;width:28px;height:1px;background:#dedede"></div>
<div class="a" style="left:0;top:589px;width:28px;height:1px;background:#dedede"></div>
<div class="a" style="left:0;top:611px;width:28px;height:1px;background:#dedede"></div>
<div class="a" style="left:0;top:633px;width:28px;height:1px;background:#dedede"></div>
<div class="a" style="left:0;top:655px;width:28px;height:1px;background:#dedede"></div>
<div class="a" style="left:0;top:242px;width:28px;height:8px;background:#f0f0f0"></div>
<div class="a" style="left:0;top:242px;width:28px;height:5.6px;overflow:hidden"><span class="t" style="left:10.6px;top:-4.4px;font-size:14.4px;color:#404040">1</span></div>
<span class="t" style="left:10.60px;top:260.81px;font-size:14.4px;color:#404040;letter-spacing:-0.816px;">2</span>
<span class="t" style="left:10.60px;top:293.41px;font-size:14.4px;color:#404040;letter-spacing:-0.816px;">3</span>
<span class="t" style="left:10.60px;top:322.51px;font-size:14.4px;color:#404040;letter-spacing:-0.816px;">4</span>
<span class="t" style="left:10.60px;top:348.51px;font-size:14.4px;color:#404040;letter-spacing:-0.816px;">5</span>
<span class="t" style="left:10.60px;top:373.51px;font-size:14.4px;color:#0e6b3a;letter-spacing:-0.816px;">6</span>
<span class="t" style="left:10.60px;top:395.51px;font-size:14.4px;color:#404040;letter-spacing:-0.816px;">7</span>
<span class="t" style="left:10.60px;top:417.51px;font-size:14.4px;color:#404040;letter-spacing:-0.816px;">8</span>
<span class="t" style="left:10.60px;top:439.51px;font-size:14.4px;color:#404040;letter-spacing:-0.816px;">9</span>
<span class="t" style="left:6.90px;top:461.51px;font-size:14.4px;color:#404040;letter-spacing:-1.416px;">10</span>
<span class="t" style="left:6.90px;top:483.51px;font-size:14.4px;color:#404040;letter-spacing:-0.353px;">11</span>
<span class="t" style="left:6.90px;top:505.51px;font-size:14.4px;color:#404040;letter-spacing:-1.416px;">12</span>
<span class="t" style="left:6.90px;top:527.51px;font-size:14.4px;color:#404040;letter-spacing:-1.416px;">13</span>
<span class="t" style="left:6.90px;top:549.51px;font-size:14.4px;color:#404040;letter-spacing:-1.416px;">14</span>
<span class="t" style="left:6.90px;top:571.51px;font-size:14.4px;color:#404040;letter-spacing:-1.416px;">15</span>
<span class="t" style="left:6.90px;top:593.51px;font-size:14.4px;color:#404040;letter-spacing:-1.416px;">16</span>
<span class="t" style="left:6.90px;top:615.51px;font-size:14.4px;color:#404040;letter-spacing:-1.416px;">17</span>
<span class="t" style="left:6.90px;top:637.51px;font-size:14.4px;color:#404040;letter-spacing:-1.416px;">18</span>
<div class="a" style="left:0;top:655px;width:28px;height:19px;overflow:hidden"><span class="t" style="left:6.9px;top:4.01px;font-size:14.4px;color:#404040;letter-spacing:-.6px">19</span></div>
<div class="a" style="left:0;top:314px;width:1003px;height:1px;background:#9c9c9c"></div>
<div class="a" style="left:235px;top:253px;width:83px;height:26px;background:#cf5b05"></div>
<div class="a" style="left:318px;top:253px;width:92px;height:26px;background:#fbe6ad"></div>
<div class="a" style="left:55px;top:279px;width:354px;height:35px;background:#f9d2d2"></div>
<div class="a" style="left:55px;top:315px;width:109px;height:51px;background:#dbe9f7"></div>
<div class="a" style="left:165px;top:315px;width:70px;height:51px;background:#fde5d2"></div>
<div class="a" style="left:236px;top:315px;width:82px;height:51px;background:#e7f0d9"></div>
<div class="a" style="left:319px;top:315px;width:90px;height:51px;background:#d5f3ec"></div>
<div class="a" style="left:55px;top:366px;width:354px;height:24.5px;background:#ec7d7c"></div>
<div class="a" style="left:54px;top:278px;width:356px;height:2px;background:#000"></div>
<div class="a" style="left:54px;top:390px;width:356px;height:2px;background:#000"></div>
<div class="a" style="left:54px;top:279px;width:2px;height:112px;background:#000"></div>
<div class="a" style="left:408px;top:279px;width:2px;height:112px;background:#000"></div>
<div class="a" style="left:56px;top:313px;width:352px;height:1px;background:#000"></div>
<div class="a" style="left:56px;top:314px;width:352px;height:1px;background:#4a4a4a"></div>
<div class="a" style="left:56px;top:340px;width:352px;height:1px;background:#000"></div>
<div class="a" style="left:164px;top:315px;width:1px;height:75px;background:#000"></div>
<div class="a" style="left:235px;top:315px;width:1px;height:75px;background:#000"></div>
<div class="a" style="left:318px;top:315px;width:1px;height:75px;background:#000"></div>
<svg style="left:405px;top:387px" width="5" height="5"><path d="M4.6 .4V4.6H.4Z" fill="#4a5fc8"/></svg>
<span class="t" style="left:59.60px;top:286.38px;font-size:24.6px;font-weight:700;color:#2273ba;transform:scaleX(0.6163);transform-origin:0 0;text-shadow:.9px 0 0 #2273ba,-.9px 0 0 #2273ba;">name</span>
<span class="t" style="left:169.00px;top:286.38px;font-size:24.6px;font-weight:700;color:#2273ba;transform:scaleX(0.6208);transform-origin:0 0;text-shadow:.9px 0 0 #2273ba,-.9px 0 0 #2273ba;">date</span>
<div class="a" style="left:236px;top:281px;width:82px;height:32px;overflow:hidden">
<span class="t" style="left:15.00px;top:5.38px;font-size:24.6px;font-weight:700;color:#2273ba;transform:scaleX(0.6395);transform-origin:0 0;text-shadow:.9px 0 0 #2273ba,-.9px 0 0 #2273ba;">cash in</span>
</div>
<div class="a" style="left:319px;top:281px;width:89px;height:32px;overflow:hidden">
<span class="t" style="left:14.00px;top:5.38px;font-size:24.6px;font-weight:700;color:#2273ba;transform:scaleX(0.6349);transform-origin:0 0;text-shadow:.9px 0 0 #2273ba,-.9px 0 0 #2273ba;">cash out</span>
</div>
<div class="a" style="left:147.4px;top:296.4px;width:16px;height:16px;border:1px solid #b2b6bd;background:linear-gradient(#fbfbfc,#e9e9ee)"></div>
<svg style="left:151.6px;top:303.0px" width="8" height="5"><path d="M0 0H7.6L3.8 4.2Z" fill="#4a4a4a"/></svg>
<div class="a" style="left:218.6px;top:296.4px;width:16px;height:16px;border:1px solid #b2b6bd;background:linear-gradient(#fbfbfc,#e9e9ee)"></div>
<svg style="left:222.79999999999998px;top:303.0px" width="8" height="5"><path d="M0 0H7.6L3.8 4.2Z" fill="#4a4a4a"/></svg>
<div class="a" style="left:301.6px;top:296.4px;width:16px;height:16px;border:1px solid #b2b6bd;background:linear-gradient(#fbfbfc,#e9e9ee)"></div>
<svg style="left:305.8px;top:303.0px" width="8" height="5"><path d="M0 0H7.6L3.8 4.2Z" fill="#4a4a4a"/></svg>
<div class="a" style="left:392.4px;top:296.4px;width:16px;height:16px;border:1px solid #b2b6bd;background:linear-gradient(#fbfbfc,#e9e9ee)"></div>
<svg style="left:396.59999999999997px;top:303.0px" width="8" height="5"><path d="M0 0H7.6L3.8 4.2Z" fill="#4a4a4a"/></svg>
<span class="t" style="left:237.60px;top:257.82px;font-size:18.4px;font-weight:700;color:#fff;transform:scaleX(1.1328);transform-origin:0 0;">balance</span>
<span class="t" style="left:363.40px;top:257.15px;font-size:19.2px;color:#1c1c1c;transform:scaleX(0.9511);transform-origin:0 0;">1000</span>
<span class="t" style="left:60.00px;top:315.75px;font-size:21.8px;font-weight:700;color:#f58220;transform:scaleX(0.5432);transform-origin:0 0;text-shadow:.4px 0 0 #f58220,-.4px 0 0 #f58220;">beganing balance</span>
<span class="t" style="left:168.20px;top:320.67px;font-size:14.8px;font-weight:700;color:#b8931b;transform:scaleX(0.8533);transform-origin:0 0;">01/01/2025</span>
<span class="t" style="left:254.20px;top:318.44px;font-size:19.8px;font-weight:700;color:#000;transform:scaleX(0.5921);transform-origin:0 0;text-shadow:.35px 0 0 #000,-.35px 0 0 #000;">1,000.00</span>
<span class="t" style="left:59.20px;top:369.69px;font-size:18.8px;font-weight:700;color:#fff;transform:scaleX(0.9892);transform-origin:0 0;">Total</span>
<span class="t" style="left:257.00px;top:369.99px;font-size:18.2px;font-weight:700;color:#fff;transform:scaleX(1.0131);transform-origin:0 0;">1000</span>
<span class="t" style="left:359.00px;top:369.99px;font-size:18.2px;font-weight:700;color:#fff;transform:scaleX(1.0272);transform-origin:0 0;">0</span>
<div class="a" style="left:480px;top:365px;width:75px;height:28px;border:2px solid #107c41"></div>
<div class="a" style="left:550px;top:388px;width:7px;height:7px;background:#fff"></div>
<div class="a" style="left:551px;top:389px;width:5.4px;height:5.4px;background:#107c41"></div>
<div class="a" style="left:1005px;top:221px;width:17px;height:455px;border-radius:8.5px;background:#f6f6f6"></div>
<svg style="left:1008.6px;top:225px" width="10" height="8"><path d="M4.7 .4L9.2 6.6H.2Z" fill="#707070" stroke="#707070" stroke-width=".6" stroke-linejoin="round"/></svg>
<div class="a" style="left:1008.8px;top:236.6px;width:9.2px;height:369.6px;border-radius:4.6px;background:#707070"></div>
<svg style="left:1008.6px;top:664px" width="10" height="8"><path d="M4.7 7L9.2 .8H.2Z" fill="#707070" stroke="#707070" stroke-width=".6" stroke-linejoin="round"/></svg>
<div class="a" style="left:0;top:675px;width:1024px;height:31px;background:#eeeeee"></div>
<div class="a" style="left:0;top:706px;width:1024px;height:22px;background:#f4f4f4"></div>
<svg style="left:28px;top:685px" width="42" height="10"><path d="M6.6 .6L.8 4.8L6.6 9M33 .6L38.8 4.8L33 9" fill="none" stroke="#333" stroke-width="1.15" stroke-linecap="round" stroke-linejoin="round"/></svg>
<svg style="left:89.8px;top:688.2px" width="12" height="3"><circle cx="1.5" cy="1.5" r="1.35" fill="#333"/><circle cx="5.7" cy="1.5" r="1.35" fill="#333"/><circle cx="9.9" cy="1.5" r="1.35" fill="#333"/></svg>
<div class="a" style="left:700.6px;top:674px;width:78.8px;height:28px;background:#fff;border-radius:0 0 5px 5px;box-shadow:0 0 1.5px rgba(0,0,0,.25)"></div>
<div class="a" style="left:700px;top:673px;width:80px;height:2px;background:#fff"></div>
<div class="a" style="left:709.6px;top:696.6px;width:61.2px;height:2.2px;border-radius:1px;background:#107c41"></div>
<span class="t" style="left:125.40px;top:682.61px;font-size:14.4px;color:#2b2b2b;letter-spacing:-0.120px;">credit note</span>
<span class="t" style="left:219.40px;top:682.61px;font-size:14.4px;color:#2b2b2b;transform:scaleX(0.8400);transform-origin:0 0;">AR</span>
<span class="t" style="left:262.00px;top:682.61px;font-size:14.4px;color:#2b2b2b;letter-spacing:-1.002px;">cash</span>
<span class="t" style="left:315.00px;top:682.61px;font-size:14.4px;color:#2b2b2b;letter-spacing:-0.737px;">expense</span>
<span class="t" style="left:393.40px;top:682.61px;font-size:14.4px;color:#2b2b2b;letter-spacing:-0.210px;">revenue from hotels</span>
<span class="t" style="left:544.60px;top:682.61px;font-size:14.4px;color:#2b2b2b;letter-spacing:-0.493px;">event expenses</span>
<span class="t" style="left:667.00px;top:682.61px;font-size:14.4px;color:#2b2b2b;transform:scaleX(0.8463);transform-origin:0 0;">GP</span>
<span class="t" style="left:798.00px;top:682.61px;font-size:14.4px;color:#2b2b2b;letter-spacing:-0.159px;">invoic</span>
<span class="t" style="left:709.60px;top:679.71px;font-size:14.4px;color:#1f1f1f;letter-spacing:0.123px;-webkit-text-stroke:.55px #1f1f1f;">operation</span>
<div class="a" style="left:205.6px;top:681.6px;width:1px;height:17px;background:#d2d2d2"></div>
<div class="a" style="left:248.2px;top:681.6px;width:1px;height:17px;background:#d2d2d2"></div>
<div class="a" style="left:301.4px;top:681.6px;width:1px;height:17px;background:#d2d2d2"></div>
<div class="a" style="left:378.4px;top:681.6px;width:1px;height:17px;background:#d2d2d2"></div>
<div class="a" style="left:529.4px;top:681.6px;width:1px;height:17px;background:#d2d2d2"></div>
<div class="a" style="left:653px;top:681.6px;width:1px;height:17px;background:#d2d2d2"></div>
<div class="a" style="left:697px;top:681.6px;width:1px;height:17px;background:#d2d2d2"></div>
<div class="a" style="left:783px;top:681.6px;width:1px;height:17px;background:#d2d2d2"></div>
<svg style="left:844.6px;top:687.4px" width="12" height="3"><circle cx="1.5" cy="1.5" r="1.35" fill="#333"/><circle cx="5.7" cy="1.5" r="1.35" fill="#333"/><circle cx="9.9" cy="1.5" r="1.35" fill="#333"/></svg>
<svg style="left:875.6px;top:683.4px" width="12" height="12"><path d="M5.8 .2V11.4M.2 5.8H11.4" stroke="#333" stroke-width="1.1"/></svg>
<svg style="left:912px;top:684.4px" width="3" height="12"><circle cx="1.3" cy="1.4" r="1.1" fill="#333"/><circle cx="1.3" cy="5.6" r="1.1" fill="#333"/><circle cx="1.3" cy="9.8" r="1.1" fill="#333"/></svg>
<div class="a" style="left:929px;top:680.4px;width:76px;height:17px;border-radius:8.5px;background:#f6f6f6"></div>
<svg style="left:933.4px;top:684.4px" width="8" height="10"><path d="M6.6 .4V9L.6 4.7Z" fill="#707070" stroke="#707070" stroke-width=".6" stroke-linejoin="round"/></svg>
<div class="a" style="left:946.6px;top:684.4px;width:36.6px;height:9.4px;border-radius:4.7px;background:#707070"></div>
<svg style="left:988.4px;top:684.4px" width="8" height="10"><path d="M1 .4V9L7 4.7Z" fill="#707070" stroke="#707070" stroke-width=".6" stroke-linejoin="round"/></svg>
<span class="t" style="left:11.60px;top:711.72px;font-size:11.2px;color:#333;letter-spacing:-0.586px;">Ready</span>
<svg style="left:62px;top:711px" width="15" height="13" viewBox="0 0 15 13"><rect x=".6" y=".6" width="13" height="11" fill="none" stroke="#333" stroke-width="1"/><path d="M.6 2.6H13.6" stroke="#333" stroke-width="1"/><path d="M2.6 5.4H6M2.6 7.6H5M2.6 9.8H5" stroke="#333" stroke-width=".9"/><circle cx="10.2" cy="8.6" r="3.4" fill="#f4f4f4" stroke="#333" stroke-width="1"/><circle cx="10.2" cy="8.6" r="1.7" fill="#333"/></svg>
<svg style="left:93.6px;top:709.8px" width="15" height="15" viewBox="0 0 15 15"><circle cx="6.4" cy="2.2" r="1.7" fill="none" stroke="#333" stroke-width="1"/><path d="M1 4.4C3 5.4 4.4 5.6 6.4 5.6C8.4 5.6 9.8 5.4 11.8 4.4L12.2 5.4C10.8 6.2 9.6 6.6 8.6 6.8V9L10.2 13.4L9.2 13.8L6.4 9.6L3.6 13.8L2.6 13.4L4.2 9V6.8C3.2 6.6 2 6.2 .6 5.4Z" fill="#fff" stroke="#333" stroke-width=".9" stroke-linejoin="round"/><path d="M8.6 9.2L13.8 14.2M13.8 9.2L8.6 14.2" stroke="#333" stroke-width="1.1"/></svg>
<span class="t" style="left:112.20px;top:711.72px;font-size:11.2px;font-weight:700;color:#2b2b2b;letter-spacing:-0.324px;">Accessibility: Investigate</span>
<div class="a" style="left:724.6px;top:706.6px;width:39.2px;height:21.4px;background:#e0e0e0"></div>
<svg style="left:737px;top:709.6px" width="14" height="14" viewBox="0 0 14 14"><rect x=".6" y=".6" width="12.6" height="12.4" fill="#fff" stroke="#333" stroke-width="1.1"/><path d="M4.8 .6V13M9 .6V13M.6 4.8H13.2M.6 8.9H13.2" stroke="#333" stroke-width="1"/></svg>
<svg style="left:777px;top:709.6px" width="15" height="14" viewBox="0 0 15 14"><rect x=".6" y=".6" width="13.4" height="12.4" rx="1" fill="#fff" stroke="#333" stroke-width="1.1"/><rect x="3.4" y="3.2" width="7.8" height="7.4" fill="#fff" stroke="#333" stroke-width="1"/><path d="M5 5.6H9.6M5 7.6H9.6" stroke="#333" stroke-width=".8"/></svg>
<svg style="left:817.4px;top:709.4px" width="15" height="14" viewBox="0 0 15 14"><rect x=".6" y=".6" width="13.4" height="12.4" fill="#fff" stroke="#333" stroke-width="1.1"/><path d="M5.2 .6V7.2H14M9.6 .6V7.2" fill="none" stroke="#333" stroke-width="1"/></svg>
<svg style="left:849.3px;top:711.4px" width="130" height="12"><path d="M.6 5.8H8.6" stroke="#333" stroke-width="1.1"/><path d="M15 5.8H115.6" stroke="#6a6a6a" stroke-width="1"/><rect x="62.4" y=".6" width="3.6" height="10.4" fill="#5f5f5f"/><path d="M118.6 5.8H127M122.8 1.6V10" stroke="#333" stroke-width="1.1"/></svg>
<span class="t" style="left:989.20px;top:711.72px;font-size:11.2px;color:#333;letter-spacing:-0.742px;">100%</span>
<div class="a" style="left:0;top:728px;width:1024px;height:40px;background:#1e2e33"></div>
<svg style="left:15.6px;top:739.6px" width="17" height="17" viewBox="0 0 17 17"><path d="M0 2.4L6.9 1.4V7.9H0ZM7.8 1.3L17 0V7.9H7.8ZM0 8.8H6.9V15.3L0 14.3ZM7.8 8.8H17V16.7L7.8 15.4Z" fill="#fff"/></svg>
<div class="a" style="left:48px;top:728px;width:288px;height:40px;background:#f2f2f2;border-top:1px solid #c8c8c8;border-bottom:1px solid #d0d0d0"></div>
<svg style="left:59.6px;top:739.6px" width="18" height="17" viewBox="0 0 18 17"><circle cx="10.8" cy="6.4" r="5.4" fill="none" stroke="#222" stroke-width="1.2"/><path d="M7 10.4L.8 16" stroke="#222" stroke-width="1.3" stroke-linecap="round"/></svg>
<span class="t" style="left:88.20px;top:740.50px;font-size:15px;color:#2d2d2d;letter-spacing:-0.277px;">Type here to search</span>
<svg style="left:258px;top:728px" width="74" height="39" viewBox="0 0 74 39">
<defs><clipPath id="cv"><path d="M1 26C4 22 8 19 10.7 16.6C15 13 20 10 24.8 8.2C30 6 36 3.6 40.7 2.6C44 1.8 47 1.2 50.1 1.2C53.5 1.2 57 1.6 59.5 2.6C62.5 3.8 65 5.6 67 8.2C69.5 11 71.2 14.5 71.7 17.6C72 20 72 22 71.2 24.1C70.4 26.6 69 29 67 30.7C64.5 33 61 34.6 57.6 35.4C53.5 36.6 49 37.4 44.5 37.7C39.5 38 34.5 37.9 29.5 37.2C25.5 36.6 21.5 35.8 18.2 34.4C16.8 33.6 16 32.6 15.4 31.6C12.5 31.4 9.6 30.8 7 29.7C4.6 29 2.6 28.6 1.4 27.9C.6 27.4 .5 26.6 1 26Z"/></clipPath>
<linearGradient id="rk" x1="0" y1="0" x2="1" y2="0"><stop offset="0" stop-color="#5e3046"/><stop offset=".45" stop-color="#6b3a4c"/><stop offset=".7" stop-color="#5a3a80"/><stop offset="1" stop-color="#4e2c62"/></linearGradient>
<linearGradient id="sky" x1="0" y1="0" x2="0" y2="1"><stop offset="0" stop-color="#9adcf2"/><stop offset=".55" stop-color="#f4ecd4"/><stop offset="1" stop-color="#fbdcb0"/></linearGradient></defs>
<g clip-path="url(#cv)"><rect width="74" height="39" fill="url(#rk)"/>
<path d="M13 23.4C17 17 24 11.6 32 9C40 6.4 50 6 57 8.4C62 10.4 65.6 15 66.4 23.4Z" fill="url(#sky)"/>
<rect x="0" y="23.2" width="74" height="16" fill="#2a93b6"/>
<path d="M2 26L14 23.2H22L18 33L8 30.4Z" fill="#2c6f92"/>
<path d="M20 23.2H52V25.4H20Z" fill="#7ed0e8"/><path d="M25 25H41L37.4 31L33 34L28.6 30.4Z" fill="#62c2e0"/><path d="M29 25.4H37L33.4 30.4Z" fill="#9adff0"/>
<path d="M56 23.4L58.4 20.4L62 18L64.4 15.4L67.4 19.4L72 23V27L64 25.4L56 25Z" fill="#e5a04e"/><path d="M60 21L64.4 16L67 20L63 22Z" fill="#f6c680"/>
<path d="M56 26H72V33L60 34Z" fill="#237f8a"/>
<path d="M19 14L20.6 22.6L22.4 12.4ZM24.6 11L27 27.4L29.4 9.6ZM31 8.6L33.4 24.6L35.8 7.6ZM37 7.4L38.4 14L40 6.8Z" fill="#a5594c"/>
<path d="M41.4 6.6L43 14.4L44.8 6.2ZM45 6.2L46.8 19L48.6 6ZM53.4 6.8L55 17.6L56.6 7.6ZM60.6 10L62 16.4L63.4 11.8Z" fill="#6d4a9c"/>
<path d="M49 6L51.2 28.6L53.4 6.4ZM57.4 8.4L59 20.6L60.6 9.6Z" fill="#c79bd6"/>
<path d="M0 24L15 21.6L17 24.4L11 30.6L0 30Z" fill="#5c3048"/><path d="M1 26C8 19 20 10 34 5.4L36 9C26 13 18 18 13 24Z" fill="#63324a" opacity=".8"/>
</g></svg>
<svg style="left:351.6px;top:739.6px" width="17" height="16" viewBox="0 0 17 16"><path d="M.6 3V.7H10.4V3M.6 12.4V14.8H10.4V12.4" fill="none" stroke="#fff" stroke-width="1.2"/><rect x="2.8" y="4.6" width="7.6" height="6.4" fill="none" stroke="#fff" stroke-width="1.2"/><path d="M14.6 .2V15.2" stroke="#fff" stroke-width="1.1"/><rect x="13" y="4.4" width="3.4" height="3" fill="#fff"/></svg>
<div class="a" style="left:387.2px;top:728px;width:36.6px;height:40px;background:#44545a"></div>
<div class="a" style="left:387.2px;top:765.8px;width:36.6px;height:2.2px;background:#76b9ed"></div>
<svg style="left:393px;top:737px" width="25" height="21" viewBox="0 0 25 21">
<rect x="6.4" y="0" width="18" height="21" rx="1.2" fill="#185c37"/>
<rect x="6.4" y="0" width="9" height="5.4" fill="#21a366"/><rect x="15.4" y="0" width="9" height="5.4" fill="#33c481"/>
<rect x="6.4" y="5.4" width="9" height="5.2" fill="#107c41"/><rect x="15.4" y="5.4" width="9" height="5.2" fill="#21a366"/>
<rect x="6.4" y="10.6" width="9" height="5.2" fill="#185c37"/><rect x="15.4" y="10.6" width="9" height="5.2" fill="#107c41"/>
<rect x="0" y="4.6" width="12.6" height="12.4" rx="1" fill="#107c41"/>
<path d="M3.6 7.4L9 14.4M9 7.4L3.6 14.4" stroke="#fff" stroke-width="1.9"/></svg>
<svg style="left:431px;top:736.6px" width="24" height="24" viewBox="0 0 24 24"><path d="M7 6V3.6C7 2.4 7.8 1.4 9 1.4H15C16.2 1.4 17 2.4 17 3.6V6" fill="none" stroke="#2b9be8" stroke-width="1.7"/>
<path d="M.6 6.6C.6 5.8 1.2 5.2 2 5.2H22C22.8 5.2 23.4 5.8 23.4 6.6V20C23.4 22 22 23.4 20 23.4H4C2 23.4 .6 22 .6 20Z" fill="#f4f4f4"/>
<rect x="7.2" y="9.2" width="4.2" height="4.2" fill="#e8473a"/><rect x="12.4" y="9.2" width="4.2" height="4.2" fill="#8fb81a"/><rect x="7.2" y="14.4" width="4.2" height="4.2" fill="#2b9be8"/><rect x="12.4" y="14.4" width="4.2" height="4.2" fill="#f2b619"/></svg>
<svg style="left:469px;top:737px" width="24" height="23" viewBox="0 0 24 23"><path d="M2 0H22V12L12 18L2 12Z" fill="#f3c88e"/><path d="M7.6 4.6C8.2 3.8 9.2 3.8 9.8 4.6M14.2 4.6C14.8 3.8 15.8 3.8 16.4 4.6" fill="none" stroke="#3b4bc8" stroke-width="1.1" stroke-linecap="round"/><path d="M8.4 7.4C10.4 10 13.6 10 15.6 7.4" fill="none" stroke="#3b4bc8" stroke-width="1.3" stroke-linecap="round"/>
<path d="M0 9.4L12 17L24 9.4V21.4C24 22.2 23.4 22.8 22.6 22.8H1.4C.6 22.8 0 22.2 0 21.4Z" fill="#8b7fe6"/><path d="M0 9.4L24 22.4C23.8 22.6 23.2 22.8 22.6 22.8H1.4C.6 22.8 0 22.2 0 21.4Z" fill="#6558cf"/></svg>
<svg style="left:507px;top:739.6px" width="23" height="16" viewBox="0 0 23 16"><path d="M0 2.4V15.8H4.6V7Z" fill="#4285f4"/><path d="M23 2.4V15.8H18.4V7Z" fill="#34a853"/><path d="M18.4 1.2L23 2.4V3.4L18.4 7Z" fill="#fbbc04"/><path d="M0 2.6L1.6 .8C2.6 .2 3.8 .4 4.6 1L11.5 6.2L18.4 1C19.2 .4 20.4 .2 21.4 .8L23 2.6L11.5 11.6Z" fill="#ea4335"/><path d="M0 2.4C0 .6 2.2 -.4 3.8 .6L4.6 1.2V7L0 3.4Z" fill="#c5221f"/></svg>
<svg style="left:542.6px;top:736.4px" width="30" height="28" viewBox="0 0 30 28"><path d="M12.4 1.2C18.6 1.2 23.6 6 23.6 12C23.6 18 18.6 22.8 12.4 22.8C10.4 22.8 8.6 22.4 7 21.4L1.4 23L3 17.8C1.8 16.2 1.2 14.2 1.2 12C1.2 6 6.2 1.2 12.4 1.2Z" fill="none" stroke="#25d366" stroke-width="2.2" stroke-linejoin="round"/>
<path d="M8.4 7C9 6.4 9.8 6.6 10.2 7.4L11 9.2C11.2 9.8 11 10.2 10.6 10.6L10 11.2C10.8 13 12.2 14.2 14 15L14.8 14.2C15.2 13.8 15.8 13.8 16.2 14L17.8 15C18.4 15.4 18.4 16.2 17.8 16.8C16.8 17.8 15.4 18 14 17.4C11 16.2 8.8 14 7.8 11C7.4 9.6 7.6 8 8.4 7Z" fill="#25d366"/>
<circle cx="22" cy="19.6" r="7.6" fill="#262626" stroke="#d8d8d8" stroke-width="1"/>
<text x="22" y="24" text-anchor="middle" font-family="Liberation Sans,sans-serif" font-size="12" fill="#fff">8</text></svg>
<div class="a" style="left:576.4px;top:728px;width:16.6px;height:40px;background:#f0f0f0"></div>
<svg style="left:580.6px;top:734.6px" width="9" height="29"><path d="M.8 4.8L4.2 1.2L7.6 4.8M.8 23.4L4.2 27L7.6 23.4" fill="none" stroke="#4a4a4a" stroke-width="1.9" stroke-linecap="round" stroke-linejoin="round"/></svg>
<svg style="left:702.6px;top:744px" width="13" height="8"><path d="M.7 7L6.3 1L11.9 7" fill="none" stroke="#f2f2f2" stroke-width="1.2" stroke-linecap="round" stroke-linejoin="round"/></svg>
<svg style="left:725px;top:741px" width="17" height="14" viewBox="0 0 17 14"><path d="M.6 4.6H3L6.6 1V13L3 9.4H.6Z" fill="none" stroke="#f2f2f2" stroke-width="1" stroke-linejoin="round"/><path d="M8.6 5C9.6 6.2 9.6 7.8 8.6 9M10.8 3.2C12.6 5.4 12.6 8.6 10.8 10.8M13 1.2C16 4.6 16 9.4 13 12.8" fill="none" stroke="#f2f2f2" stroke-width="1" stroke-linecap="round"/></svg>
<svg style="left:748.8px;top:741px" width="17" height="14" viewBox="0 0 17 14"><path d="M.6 4.6H3L6.6 1V13L3 9.4H.6Z" fill="none" stroke="#f2f2f2" stroke-width="1" stroke-linejoin="round"/><path d="M8.6 5C9.6 6.2 9.6 7.8 8.6 9M10.8 3.2C12.6 5.4 12.6 8.6 10.8 10.8M13 1.2C16 4.6 16 9.4 13 12.8" fill="none" stroke="#f2f2f2" stroke-width="1" stroke-linecap="round"/></svg>
<svg style="left:775.6px;top:740px" width="12" height="17" viewBox="0 0 12 17"><path d="M1.4 3.4C2.4 1.6 4 .7 5.8 .7C7.6 .7 9.2 1.6 10.2 3.4M1.4 13.6C2.4 15.4 4 16.3 5.8 16.3C7.6 16.3 9.2 15.4 10.2 13.6" fill="none" stroke="#f2f2f2" stroke-width="1"/><rect x=".6" y="4.8" width="7.2" height="7" rx="1.4" fill="none" stroke="#f2f2f2" stroke-width="1"/><path d="M7.8 7.4L11 5.6V11L7.8 9.2Z" fill="none" stroke="#f2f2f2" stroke-width="1" stroke-linejoin="round"/></svg>
<svg style="left:797px;top:742.4px" width="17" height="11" viewBox="0 0 17 11"><path d="M4.6 10.8C2 10.8 .2 9.2 .2 7.2C.2 5.4 1.4 4 3.2 3.6C4 1.6 5.8 .2 8 .2C10.4 .2 12.2 1.6 12.8 3.8C15 3.8 16.8 5.2 16.8 7.4C16.8 9.4 15.2 10.8 13.2 10.8Z" fill="#e6e6e6"/><path d="M1 8.6L10 3.4L13.4 5.6L5.6 10.8H4.6C2.8 10.8 1.6 10 1 8.6Z" fill="#a8a8a8"/></svg>
<svg style="left:821px;top:742px" width="17" height="12" viewBox="0 0 17 12"><rect x="5" y="2.4" width="10.4" height="7.2" fill="none" stroke="#f2f2f2" stroke-width="1.1"/><rect x="15.6" y="4.6" width="1.2" height="2.8" fill="#f2f2f2"/><rect x="6.4" y="3.8" width="6" height="4.4" fill="#f2f2f2"/><path d="M1.4 .4V2.4M3.8 .4V2.4M.4 2.6H4.8V4.4C4.8 5.6 3.8 6.4 2.6 6.4C1.4 6.4 .4 5.6 .4 4.4ZM2.6 6.4V9.4H5" fill="none" stroke="#f2f2f2" stroke-width="1"/></svg>
<svg style="left:848px;top:742.4px" width="13" height="13" viewBox="0 0 13 13"><path d="M.6 12.4C.6 5.8 5.8 .6 12.4 .6" fill="none" stroke="#f2f2f2" stroke-width="1.1"/><path d="M4.2 12.4C4.2 7.8 7.8 4.2 12.4 4.2" fill="none" stroke="#b8b8b8" stroke-width="1.1"/><path d="M7.6 12.4C7.6 9.8 9.8 7.6 12.4 7.6" fill="none" stroke="#b8b8b8" stroke-width="1.1"/><circle cx="11.2" cy="11.2" r="1.5" fill="#f2f2f2"/></svg>
<span class="t" style="left:879.8px;top:743.6px;font-size:11.6px;color:#f2f2f2;font-family:'DejaVu Sans','Liberation Sans',sans-serif">ع</span>
<span class="t" style="left:911.60px;top:732.47px;font-size:12.2px;color:#f2f2f2;letter-spacing:-0.371px;">11:14 AM</span>
<span class="t" style="left:907.80px;top:750.27px;font-size:12.2px;color:#f2f2f2;letter-spacing:-0.444px;">19/01/2025</span>
<svg style="left:982.6px;top:739.6px" width="18" height="17" viewBox="0 0 18 17"><path d="M.4 .4H15.6V12.2H8.6L5.4 15.4V12.2H.4Z" fill="#f2f2f2"/><path d="M3 3.6H13M3 6.2H13M3 8.8H9" stroke="#1e2e33" stroke-width="1.2"/><circle cx="13.6" cy="12.6" r="3.4" fill="#1e2e33"/><path d="M15.6 10.6C13.8 10.4 12 11.6 12 13.4C12 14.6 13 15.6 14.4 15.6C15.6 15.6 16.6 14.8 16.8 13.6C15.8 14 14.6 13.4 14.6 12.2C14.6 11.6 15 11 15.6 10.6Z" fill="none" stroke="#f2f2f2" stroke-width=".9"/></svg>
<div class="a" style="left:1019.4px;top:728px;width:1px;height:40px;background:#5a666a"></div>
<div class="a" style="left:440px;top:676px;width:150px;height:84px;opacity:.4;pointer-events:none">
<span class="t" style="left:10px;top:17.4px;font-size:38px;font-weight:700;color:#b0b0b0;font-family:'DejaVu Sans','Noto Sans CJK SC',sans-serif;direction:rtl;transform:scaleX(.92);transform-origin:0 0">مستقل</span>
<span class="t" style="left:10px;top:54.4px;font-size:21px;font-weight:700;color:#b0b0b0;letter-spacing:-.2px">mostaql.com</span>
</div>
</body></html>
